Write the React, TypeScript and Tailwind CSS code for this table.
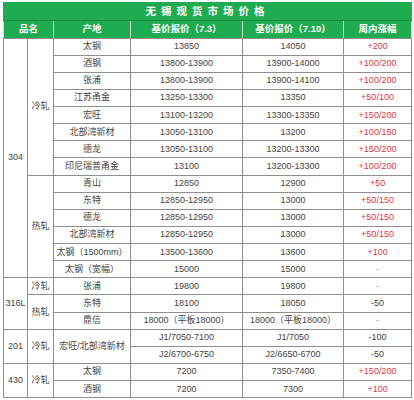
import type { ReactNode } from 'react'

type Span = [string, number]

type Row = {
  grade?: Span
  proc?: Span
  origin?: Span
  p1: string
  p2: string
  chg: string
}

const rows: Row[] = [
  { grade: ['304', 14], proc: ['冷轧', 8], origin: ['太钢', 1], p1: '13850', p2: '14050', chg: '+200' },
  { origin: ['酒钢', 1], p1: '13800-13900', p2: '13900-14000', chg: '+100/200' },
  { origin: ['张浦', 1], p1: '13800-13900', p2: '13900-14100', chg: '+100/200' },
  { origin: ['江苏甬金', 1], p1: '13250-13300', p2: '13350', chg: '+50/100' },
  { origin: ['宏旺', 1], p1: '13100-13200', p2: '13300-13350', chg: '+150/200' },
  { origin: ['北部湾新材', 1], p1: '13050-13100', p2: '13200', chg: '+100/150' },
  { origin: ['德龙', 1], p1: '13050-13100', p2: '13200-13300', chg: '+150/200' },
  { origin: ['印尼瑞普甬金', 1], p1: '13100', p2: '13200-13300', chg: '+100/200' },
  { proc: ['热轧', 6], origin: ['青山', 1], p1: '12850', p2: '12900', chg: '+50' },
  { origin: ['东特', 1], p1: '12850-12950', p2: '13000', chg: '+50/150' },
  { origin: ['德龙', 1], p1: '12850-12950', p2: '13000', chg: '+50/150' },
  { origin: ['北部湾新材', 1], p1: '12850-12950', p2: '13000', chg: '+50/150' },
  { origin: ['太钢（1500mm）', 1], p1: '13500-13600', p2: '13600', chg: '+100' },
  { origin: ['太钢（宽幅）', 1], p1: '15000', p2: '15000', chg: '-' },
  { grade: ['316L', 3], proc: ['冷轧', 1], origin: ['张浦', 1], p1: '19800', p2: '19800', chg: '-' },
  { proc: ['热轧', 2], origin: ['东特', 1], p1: '18100', p2: '18050', chg: '-50' },
  { origin: ['鼎信', 1], p1: '18000（平板18000）', p2: '18000（平板18000）', chg: '-' },
  { grade: ['201', 2], proc: ['冷轧', 2], origin: ['宏旺/北部湾新材', 2], p1: 'J1/7050-7100', p2: 'J1/7050', chg: '-100' },
  { p1: 'J2/6700-6750', p2: 'J2/6650-6700', chg: '-50' },
  { grade: ['430', 2], proc: ['冷轧', 2], origin: ['太钢', 1], p1: '7200', p2: '7350-7400', chg: '+150/200' },
  { origin: ['酒钢', 1], p1: '7200', p2: '7300', chg: '+100' },
]

const cell = 'border border-[#8f8f8f] p-0 text-center align-middle whitespace-nowrap leading-none'
const head = 'border border-[#bfe3c9] border-b-[#8f8f8f] p-0 text-center align-middle font-bold text-white whitespace-nowrap leading-none'

function Td({ span, children, className = '' }: { span?: number; children: ReactNode; className?: string }) {
  return (
    <td rowSpan={span} className={`${cell} ${className}`}>
      {children}
    </td>
  )
}

function changeColor(v: string) {
  if (v.startsWith('+')) return 'text-[#e0353d]'
  if (v === '-') return 'text-[#9a9a9a]'
  return 'text-[#444]'
}

export default function App() {
  return (
    <div className="w-[414px] h-[400px] bg-white pl-[3px] pt-[2px] overflow-hidden">
      <table
        className="w-[408px] table-fixed border-collapse text-[9px] text-[#444]"
        style={{ fontFamily: '"Liberation Sans", "Noto Sans CJK SC", sans-serif' }}
      >
        <colgroup>
          <col className="w-[24px]" />
          <col className="w-[26px]" />
          <col className="w-[77px]" />
          <col className="w-[112px]" />
          <col className="w-[101px]" />
          <col className="w-[68px]" />
        </colgroup>
        <thead>
          <tr className="h-[17.5px] bg-[#1fab4f]">
            <th
              colSpan={6}
              className="border border-[#1fab4f] border-b-[#138a3b] p-0 text-center align-middle text-[10.5px] font-bold tracking-[5px] text-white leading-none"
            >
              无锡现货市场价格
            </th>
          </tr>
          <tr className="h-[18px] bg-[#1fab4f] text-[9.5px]">
            <th colSpan={2} className={head}>品名</th>
            <th className={head}>产地</th>
            <th className={head}>基价报价（7.3）</th>
            <th className={head}>基价报价（7.10）</th>
            <th className={head}>周内涨幅</th>
          </tr>
        </thead>
        <tbody>
          {rows.map((r, i) => (
            <tr key={i} className="h-[17.14px]">
              {r.grade && <Td span={r.grade[1]}>{r.grade[0]}</Td>}
              {r.proc && <Td span={r.proc[1]}>{r.proc[0]}</Td>}
              {r.origin && <Td span={r.origin[1]}>{r.origin[0]}</Td>}
              <Td>{r.p1}</Td>
              <Td>{r.p2}</Td>
              <Td className={changeColor(r.chg)}>{r.chg}</Td>
            </tr>
          ))}
        </tbody>
      </table>
    </div>
  )
}
